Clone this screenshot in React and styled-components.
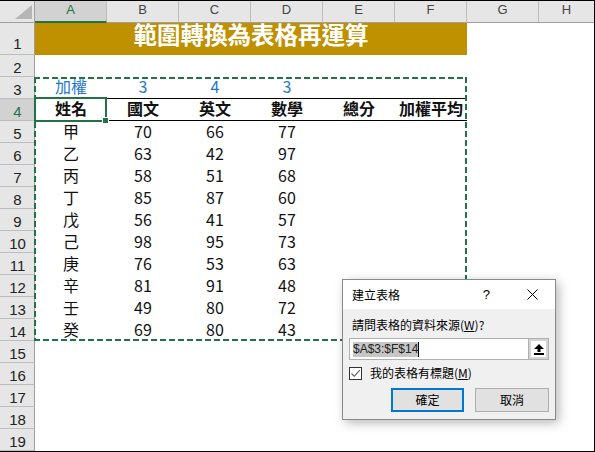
import React from "react";
import styled, { createGlobalStyle } from "styled-components";

const GlobalStyle = createGlobalStyle`
  html, body { margin: 0; padding: 0; background: #fff; }
  body { font-family: "Noto Sans CJK TC", "Noto Sans", sans-serif; }
  *, *::before, *::after { box-sizing: border-box; }
`;

const GREEN = "#217346";
const SEP = "#bdbdbd";
const EDGE = "#9f9f9f";

const Sheet = styled.div`
  position: relative;
  width: 595px;
  height: 452px;
  border-top: 1px solid #000;
  border-right: 1px solid #000;
  border-bottom: 1px solid #000;
  display: grid;
  grid-template-columns: 35px repeat(7, 72px) 1fr;
  grid-template-rows: 22px 32px repeat(18, 22px);
  overflow: hidden;
  background: #fff;
`;

const Corner = styled.div`
  grid-row: 1;
  grid-column: 1;
  background: #e6e6e6;
  border-right: 1px solid ${EDGE};
  border-bottom: 1px solid ${EDGE};
  display: flex;
  align-items: flex-end;
  justify-content: flex-end;
  padding: 0 2px 3px 0;
`;

const ColHead = styled.div`
  grid-row: 1;
  grid-column: ${(p) => p.$col};
  background: ${(p) => (p.$selected ? "#d2d2d2" : "#e6e6e6")};
  color: ${(p) => (p.$selected ? GREEN : "#444")};
  border-right: ${(p) => (p.$last ? "none" : `1px solid ${SEP}`)};
  border-bottom: ${(p) => (p.$selected ? `2px solid ${GREEN}` : `1px solid ${EDGE}`)};
  display: flex;
  align-items: center;
  justify-content: center;
  font-family: "Liberation Sans", sans-serif;
  font-size: 13px;
  line-height: 14px;
  padding-bottom: ${(p) => (p.$selected ? "2px" : "3px")};
`;

const RowHead = styled.div`
  grid-row: ${(p) => p.$row};
  grid-column: 1;
  background: ${(p) => (p.$selected ? "#d2d2d2" : "#e6e6e6")};
  color: ${(p) => (p.$selected ? GREEN : "#222")};
  border-right: 1px solid ${EDGE};
  border-bottom: 1px solid ${SEP};
  display: flex;
  align-items: flex-end;
  justify-content: center;
  font-family: "Liberation Sans", sans-serif;
  font-size: 15px;
  line-height: 15px;
  padding: 0 0 ${(p) => (p.$tall ? "3px" : "1px")} 1px;
`;

const Title = styled.div`
  grid-row: 2;
  grid-column: 2 / span 6;
  background: #bf9000;
  color: #fff;
  display: flex;
  align-items: center;
  justify-content: center;
  font-family: "Noto Sans CJK TC", sans-serif;
  font-weight: 700;
  font-size: 23.5px;
  line-height: 23px;
  padding-bottom: 9px;
`;

const Cell = styled.div`
  grid-row: ${(p) => p.$row};
  grid-column: ${(p) => p.$col};
  display: flex;
  align-items: center;
  justify-content: center;
  font-family: "Noto Sans CJK TC", sans-serif;
  font-size: 16px;
  line-height: 18px;
  padding-bottom: 3px;
  color: ${(p) => (p.$blue ? "#1f78c8" : "#111")};
  font-weight: ${(p) => (p.$bold ? 700 : 400)};
  border-bottom: ${(p) => (p.$rule ? "1px solid #000" : "none")};
  white-space: nowrap;
`;

const dashH = `repeating-linear-gradient(90deg, ${GREEN} 0 6px, transparent 6px 9px)`;
const dashV = `repeating-linear-gradient(180deg, ${GREEN} 0 6px, transparent 6px 9px)`;

const Marquee = styled.div`
  grid-row: 4 / span 12;
  grid-column: 2 / span 6;
  margin-left: -1px;
  pointer-events: none;
  z-index: 2;
  background: ${dashH} left top / 100% 2px no-repeat,
    ${dashH} left bottom / 100% 2px no-repeat,
    ${dashV} left top / 2px 100% no-repeat,
    ${dashV} right top / 2px 100% no-repeat;
`;

const Selection = styled.div`
  grid-row: 5;
  grid-column: 2;
  margin: -2px 0 -1px -1px;
  border: 2px solid ${GREEN};
  position: relative;
  z-index: 3;
  pointer-events: none;
`;

const FillHandle = styled.div`
  position: absolute;
  right: -4px;
  bottom: -4px;
  width: 7px;
  height: 7px;
  background: ${GREEN};
  border: 1px solid #fff;
`;

/* ---------- dialog ---------- */

const Dialog = styled.div`
  position: absolute;
  left: 342px;
  top: 278px;
  width: 214px;
  height: 141px;
  border: 1px solid #8a8a8a;
  background: #f0f0f0;
  box-shadow: 3px 3px 10px rgba(0, 0, 0, 0.28);
  display: flex;
  flex-direction: column;
  z-index: 10;
  font-family: "Noto Sans CJK TC", sans-serif;
  font-size: 12px;
  color: #000;
`;

const TitleBar = styled.div`
  height: 29px;
  flex: none;
  background: #fff;
  display: flex;
  align-items: center;
  padding: 0 17px 0 9px;
`;

const TitleText = styled.div`
  flex: 1;
  line-height: 16px;
`;

const Help = styled.div`
  font-family: "Liberation Sans", sans-serif;
  font-size: 13px;
  margin-right: 37px;
  line-height: 16px;
`;

const Body = styled.div`
  flex: 1;
  display: flex;
  flex-direction: column;
  padding: 0 6px 7px 6px;
`;

const Label = styled.div`
  margin-top: 8px;
  line-height: 16px;
  padding-left: 3px;
`;

const Key = styled.span`
  text-decoration: underline;
`;

const InputWrap = styled.div`
  margin-top: 5px;
  height: 22px;
  border: 1px solid #b0b0b0;
  background: #fff;
  display: flex;
`;

const InputText = styled.div`
  flex: 1;
  display: flex;
  align-items: center;
  padding-left: 3px;
`;

const Highlight = styled.span`
  background: #c6c6c6;
  color: #222;
  font-family: "Liberation Sans", sans-serif;
  font-size: 12px;
  line-height: 15px;
`;

const Caret = styled.span`
  display: inline-block;
  width: 1px;
  height: 15px;
  background: #000;
`;

const PickButton = styled.div`
  width: 20px;
  flex: none;
  border-left: 1px solid #b0b0b0;
  background: #fff;
  box-shadow: inset 0 0 0 2px #d4d4d4;
  display: flex;
  align-items: center;
  justify-content: center;
`;

const CheckRow = styled.div`
  margin-top: 5px;
  height: 16px;
  display: flex;
  align-items: center;
  gap: 8px;
  line-height: 16px;
`;

const CheckBox = styled.div`
  width: 13px;
  height: 13px;
  border: 1px solid #333;
  background: #fff;
  display: flex;
  align-items: center;
  justify-content: center;
`;

const Buttons = styled.div`
  margin-top: 7px;
  display: flex;
  justify-content: flex-end;
  gap: 11px;
`;

const Button = styled.div`
  width: ${(p) => (p.$primary ? "73px" : "74px")};
  height: 24px;
  background: #e1e1e1;
  border: ${(p) => (p.$primary ? "2px solid #0078d7" : "1px solid #adadad")};
  display: flex;
  align-items: center;
  justify-content: center;
  line-height: 16px;
`;

const cols = ["A", "B", "C", "D", "E", "F", "G", "H"];

const data = [
  ["甲", 70, 66, 77],
  ["乙", 63, 42, 97],
  ["丙", 58, 51, 68],
  ["丁", 85, 87, 60],
  ["戊", 56, 41, 57],
  ["己", 98, 95, 73],
  ["庚", 76, 53, 63],
  ["辛", 81, 91, 48],
  ["壬", 49, 80, 72],
  ["癸", 69, 80, 43],
];

const weights = ["加權", "3", "4", "3", "", ""];
const heads = ["姓名", "國文", "英文", "數學", "總分", "加權平均"];

export default function App() {
  return (
    <>
      <GlobalStyle />
      <Sheet>
        <Corner>
          <svg width="17" height="14" viewBox="0 0 17 14">
            <polygon points="17,0 17,14 0,14" fill="#b5b5b5" />
          </svg>
        </Corner>
        {cols.map((c, i) => (
          <ColHead key={c} $col={i + 2} $selected={c === "A"} $last={i === 7}>
            {c}
          </ColHead>
        ))}
        {Array.from({ length: 19 }, (_, i) => (
          <RowHead key={i} $row={i + 2} $selected={i === 3} $tall={i === 0}>
            {i + 1}
          </RowHead>
        ))}
        <Title>範圍轉換為表格再運算</Title>

        {weights.map((w, i) => (
          <Cell key={"w" + i} $row={4} $col={i + 2} $blue $rule>
            {w}
          </Cell>
        ))}
        {heads.map((h, i) => (
          <Cell key={"h" + i} $row={5} $col={i + 2} $bold $rule>
            {h}
          </Cell>
        ))}
        {data.map((r, ri) =>
          r.map((v, ci) => (
            <Cell key={ri + "-" + ci} $row={ri + 6} $col={ci + 2}>
              {v}
            </Cell>
          ))
        )}

        <Marquee />
        <Selection>
          <FillHandle />
        </Selection>

        <Dialog>
          <TitleBar>
            <TitleText>建立表格</TitleText>
            <Help>?</Help>
            <svg width="11" height="11" viewBox="0 0 11 11">
              <path d="M0.5 0.5 L10.5 10.5 M10.5 0.5 L0.5 10.5" stroke="#000" strokeWidth="1" />
            </svg>
          </TitleBar>
          <Body>
            <Label>
              請問表格的資料來源(<Key>W</Key>)?
            </Label>
            <InputWrap>
              <InputText>
                <Highlight>$A$3:$F$14</Highlight>
                <Caret />
              </InputText>
              <PickButton>
                <svg width="10" height="11" viewBox="0 0 10 11">
                  <polygon points="5,0 10,5 6.5,5 6.5,8 3.5,8 3.5,5 0,5" fill="#000" />
                  <rect x="0" y="9" width="10" height="2" fill="#000" />
                </svg>
              </PickButton>
            </InputWrap>
            <CheckRow>
              <CheckBox>
                <svg width="11" height="11" viewBox="0 0 11 11">
                  <path d="M1.5 5.5 L4.2 8.3 L9.8 2.2" stroke="#555" strokeWidth="1.1" fill="none" />
                </svg>
              </CheckBox>
              <span>
                我的表格有標題(<Key>M</Key>)
              </span>
            </CheckRow>
            <Buttons>
              <Button $primary>確定</Button>
              <Button>取消</Button>
            </Buttons>
          </Body>
        </Dialog>
      </Sheet>
    </>
  );
}
